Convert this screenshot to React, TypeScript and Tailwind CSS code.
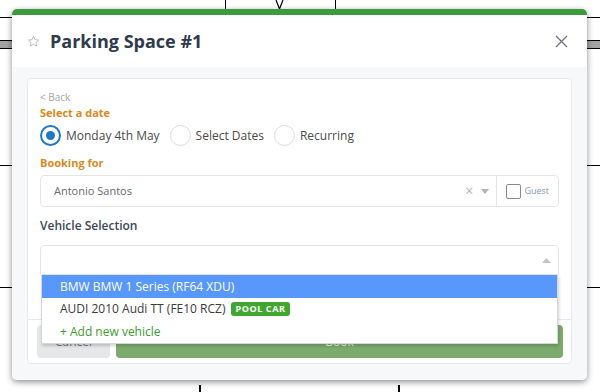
import React from 'react';

const Radio: React.FC<{ checked?: boolean; label: string }> = ({ checked, label }) => (
  <div className="flex items-center">
    <span
      className={`w-[21px] h-[21px] rounded-full bg-white flex items-center justify-center ${
        checked ? 'border-2 border-[#1f78c8]' : 'border border-[#dcdcdc]'
      }`}
    >
      {checked && <span className="w-[9px] h-[9px] rounded-full bg-[#1f78c8]" />}
    </span>
    <span className="ml-[5px] text-[12px] text-[#4a4a4a]">{label}</span>
  </div>
);

const App: React.FC = () => {
  return (
    <div className="relative w-[600px] h-[392px] bg-white overflow-hidden font-['Open_Sans',sans-serif]">
      {/* page behind the modal */}
      <div className="absolute left-0 right-0 top-[17px] h-px bg-black" />
      <div className="absolute left-0 right-0 top-[40px] h-[9px] border-y border-black bg-[#a3a3a3]" />
      <div className="absolute left-0 right-0 top-[165px] h-px bg-black" />
      <div className="absolute left-0 right-0 top-[287px] h-px bg-black" />
      <div className="absolute top-0 left-[225px] w-px h-[10px] bg-black" />
      <svg className="absolute top-0 left-[275px]" width="9" height="10" viewBox="0 0 9 10">
        <polyline points="1,0 4.5,9 8,0" fill="none" stroke="#000" strokeWidth="1.2" />
      </svg>
      <div className="absolute top-0 left-[335px] w-px h-[10px] bg-black" />
      <div className="absolute bottom-0 left-[199px] w-[2px] h-[7px] bg-black" />
      <div className="absolute bottom-0 left-[398px] w-[2px] h-[7px] bg-black" />

      {/* modal */}
      <div className="absolute left-[12px] top-[9px] w-[575px] h-[371px] bg-white rounded-[5px] overflow-hidden shadow-[0_2px_6px_rgba(0,0,0,0.45)] flex flex-col">
        <div className="h-[6px] bg-[#3d9a3d] shrink-0" />
        <div className="h-[52px] shrink-0 flex items-center pl-[15px] pr-[19px]">
          <svg width="13" height="13" viewBox="0 0 24 24" fill="none" stroke="#b8bcc4" strokeWidth="1.8" strokeLinejoin="round">
            <path d="M12 2.5l2.9 6.1 6.6.8-4.9 4.6 1.3 6.6L12 17.3l-5.9 3.3 1.3-6.6-4.9-4.6 6.6-.8z" />
          </svg>
          <h1 className="ml-[10px] text-[18px] font-bold text-[#2f3a4b]">Parking Space #1</h1>
          <svg className="ml-auto" width="13" height="13" viewBox="0 0 13 13" stroke="#6b7280" strokeWidth="1.3">
            <path d="M1 1l11 11M12 1L1 12" />
          </svg>
        </div>

        <div className="flex-1 bg-[#f7f8fa] pl-[15px] pr-[15px] pt-[11px] pb-[16px]">
          <div className="h-full bg-white border border-[#e6e8eb] rounded-[4px] flex flex-col">
            <div className="relative pl-[12px] pr-[12px] pt-[10px]">
              <div className="h-[16px] flex items-center text-[10px] text-[#a3a3a3]">&lt; Back</div>
              <div className="h-[16px] flex items-center text-[11px] font-bold text-[#d98a1b]">Select a date</div>
              <div className="h-[25px] flex items-center gap-[10px] mt-[2px]">
                <Radio checked label="Monday 4th May" />
                <Radio label="Select Dates" />
                <Radio label="Recurring" />
              </div>
              <div className="h-[16px] mt-[7px] flex items-center text-[11px] font-bold text-[#d98a1b]">Booking for</div>
              <div className="mt-[4px] h-[32px] border border-[#e3e5e8] rounded-[4px] flex items-center">
                <span className="pl-[13px] text-[11px] text-[#6b6b6b]">Antonio Santos</span>
                <span className="ml-auto text-[14px] text-[#b4b4b4] leading-none">×</span>
                <svg className="ml-[8px] mr-[7px]" width="8" height="5" viewBox="0 0 8 5">
                  <path d="M0 0h8L4 5z" fill="#b4b4b4" />
                </svg>
                <div className="h-full border-l border-[#e3e5e8] flex items-center pl-[9px] pr-[9px]">
                  <span className="w-[15px] h-[15px] border border-[#8a8a8a] rounded-[2px]" />
                  <span className="ml-[3px] text-[9px] text-[#8497b5]">Guest</span>
                </div>
              </div>
              <div className="h-[18px] mt-[10px] flex items-center text-[12px] font-semibold text-[#3b4757]">Vehicle Selection</div>
              <div className="mt-[10px] h-[30px] border border-[#e3e5e8] rounded-t-[4px] flex items-center justify-end pr-[7px]">
                <svg width="9" height="5" viewBox="0 0 9 5">
                  <path d="M0 5h9L4.5 0z" fill="#c4c4c4" />
                </svg>
              </div>

              {/* open dropdown */}
              <div className="absolute z-10 left-[13px] right-[13px] top-[196px] bg-white border border-[#d6d6d6] border-t-0 shadow-[1px_2px_3px_rgba(0,0,0,0.18)]">
                <div className="h-[23px] bg-[#5897fb] flex items-center pl-[18px] text-[12px] text-white">BMW BMW 1 Series (RF64 XDU)</div>
                <div className="h-[22px] flex items-center pl-[18px] text-[12px] text-[#3a3a3a]">
                  AUDI 2010 Audi TT (FE10 RCZ)
                  <span className="ml-[6px] h-[14px] px-[4px] rounded-[3px] bg-[#3fa72f] text-white text-[9px] font-bold tracking-[0.6px] flex items-center">POOL CAR</span>
                </div>
                <div className="h-[23px] flex items-center pl-[18px] text-[12px] text-[#3d9b2f]">+ Add new vehicle</div>
              </div>
            </div>

            <div className="mt-auto border-t border-[#e6e8eb] pl-[9px] pr-[8px] py-[5px] flex gap-[6px]">
              <button className="w-[73px] h-[33px] rounded-[4px] bg-[#e6e7e9] text-[12px] text-[#7a7a7a]">Cancel</button>
              <button className="flex-1 h-[33px] rounded-[4px] bg-[#7cab6e] text-[12px] text-[#e8f0e4]">Book</button>
            </div>
          </div>
        </div>
      </div>
    </div>
  );
};

export default App;
